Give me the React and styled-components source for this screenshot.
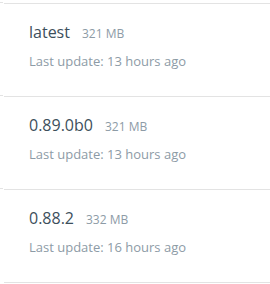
import React from "react";
import styled, { createGlobalStyle } from "styled-components";

const GlobalStyle = createGlobalStyle`
  body {
    margin: 0;
    background: #ffffff;
    font-family: "Open Sans", "Liberation Sans", sans-serif;
  }
`;

const List = styled.div`
  padding-top: 3px;
  width: 270px;
`;

const Item = styled.div`
  position: relative;
  margin-left: 4px;
  height: 92px;
  border-top: 1px solid #e3e3e3;
  box-sizing: content-box;
  padding-left: 25px;
  display: flex;
  flex-direction: column;
  &:last-child {
    border-bottom: 1px solid #e3e3e3;
  }
  &::before {
    content: "";
    position: absolute;
    left: -4px;
    top: -2px;
    width: 3px;
    height: 1px;
    background: #e3e3e3;
  }
`;

const TitleRow = styled.div`
  display: flex;
  align-items: baseline;
  gap: 12px;
  margin-top: 17px;
  line-height: 22px;
`;

const Name = styled.span`
  font-size: 16px;
  color: #3d4f5c;
`;

const Size = styled.span`
  font-size: 12px;
  color: #8d9ba6;
`;

const Updated = styled.div`
  margin-top: 7px;
  font-size: 13px;
  line-height: 18px;
  color: #8d9ba6;
`;

const tags = [
  { name: "latest", size: "321 MB", ago: "13 hours ago" },
  { name: "0.89.0b0", size: "321 MB", ago: "13 hours ago" },
  { name: "0.88.2", size: "332 MB", ago: "16 hours ago" },
];

export default function App() {
  return (
    <>
      <GlobalStyle />
      <List>
        {tags.map((tag) => (
          <Item key={tag.name}>
            <TitleRow>
              <Name>{tag.name}</Name>
              <Size>{tag.size}</Size>
            </TitleRow>
            <Updated>Last update: {tag.ago}</Updated>
          </Item>
        ))}
      </List>
    </>
  );
}
